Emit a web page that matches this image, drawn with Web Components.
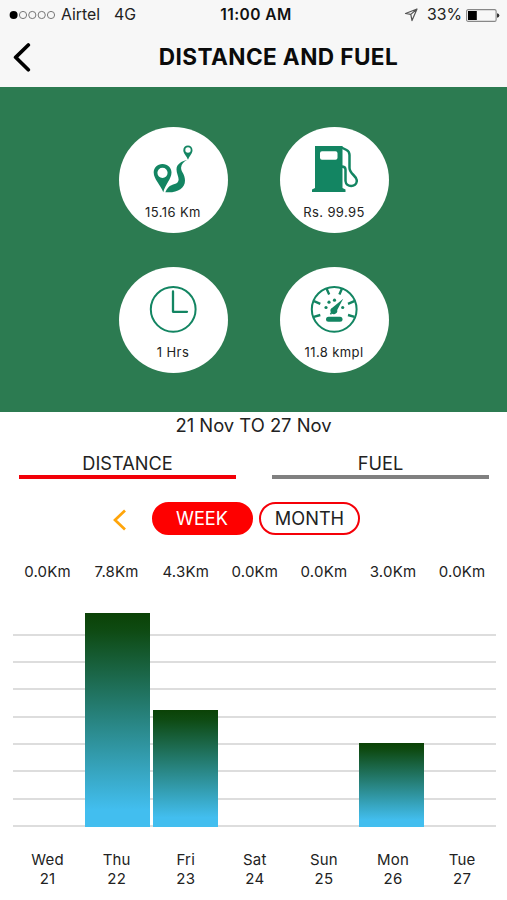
<!DOCTYPE html>
<html lang="en">
<head>
<meta charset="utf-8">
<meta name="viewport" content="width=device-width, initial-scale=1">
<title>Distance and Fuel</title>
<style>
  html,body{margin:0;height:100%}
  body{background:#fff;color:#222;font-family:Inter,"Liberation Sans",sans-serif;overflow:hidden}
</style>
</head>
<body>
<trip-screen></trip-screen>
<script>
const RESET = "*,*::before,*::after{box-sizing:border-box}svg{display:block}";

class PhoneStatus extends HTMLElement {
  constructor() { super(); this.attachShadow({ mode: "open" }); }
  connectedCallback() {
    this.shadowRoot.innerHTML = `
      <style>${RESET}
        :host{display:grid;grid-template-columns:1fr auto 1fr;align-items:center;height:30px;padding:0 7px 0 9px;font-size:15.8px;line-height:30px;color:#222}
        .left,.right{display:flex;align-items:center}
        .right{justify-content:flex-end}
        .net{margin-left:14px}
        .carrier{margin-left:5px}
        .time{font-weight:600;font-size:15.5px;letter-spacing:.45px;color:#111;padding-left:3px}
        .pct{margin:0 4px 0 9px}
      </style>
      <div class="left">
        <svg width="47" height="10" viewBox="0 0 47 10"><circle cx="4.6" cy="5" r="4" fill="#000"/>
          <g fill="none" stroke="#777" stroke-width="1"><circle cx="14" cy="5" r="3.6"/><circle cx="23.3" cy="5" r="3.6"/><circle cx="32.7" cy="5" r="3.6"/><circle cx="42" cy="5" r="3.6"/></g></svg>
        <span class="carrier">Airtel</span><span class="net">4G</span>
      </div>
      <span class="time">11:00 AM</span>
      <div class="right">
        <svg width="14" height="14" viewBox="0 0 14 14"><path d="M13 1 1.500 5.500l5.300.9 1.200 6.200zM13 1 6.800 6.400" fill="none" stroke="#555" stroke-width="1.2" stroke-linejoin="round"/></svg>
        <span class="pct">33%</span>
        <svg width="34" height="13" viewBox="0 0 34 13"><rect x=".6" y=".6" width="29.5" height="11.8" rx="1.5" fill="none" stroke="#888" stroke-width="1.1"/><path d="M2 2h8.800v9H2z"/><path d="M31 4.200q2.400.4 2.400 2.300T31 8.800z" fill="#333"/></svg>
      </div>`;
  }
}

class NavBar extends HTMLElement {
  constructor() { super(); this.attachShadow({ mode: "open" }); }
  connectedCallback() {
    this.shadowRoot.innerHTML = `
      <style>${RESET}
        :host{display:flex;align-items:center;height:57px;padding:0 0 3px 12px}
        .title{flex:1;text-align:center;padding-left:19px;font-size:22.6px;font-weight:700;line-height:54px;letter-spacing:.4px;color:#0b0b0b;white-space:nowrap}
      </style>
      <svg width="19" height="30" viewBox="0 0 19 30"><path d="M16.300 3 3.600 15.300l12.700 12.500" fill="none" stroke="#000" stroke-width="3.7" stroke-linecap="round" stroke-linejoin="round"/></svg>
      <div class="title"><slot></slot></div>`;
  }
}

/* Round white badge: icon goes in the slot, caption comes from the label attribute. */
class StatBadge extends HTMLElement {
  constructor() { super(); this.attachShadow({ mode: "open" }); }
  connectedCallback() {
    this.shadowRoot.innerHTML = `
      <style>${RESET}
        :host{display:flex;flex-direction:column;align-items:center;width:109px;height:106px;padding-top:15.5px;border-radius:50%;background:#fff;color:#138562}
        .label{margin-top:10.5px;font-size:13px;line-height:18px;letter-spacing:.4px;color:#222;white-space:nowrap}
      </style>
      <slot></slot>
      <div class="label">${this.getAttribute("label")}</div>`;
  }
}

class TabItem extends HTMLElement {
  constructor() { super(); this.attachShadow({ mode: "open" }); }
  connectedCallback() {
    this.shadowRoot.innerHTML = `
      <style>${RESET}
        :host{display:block;flex:1;text-align:center;font-size:18.2px;line-height:24px;border-bottom:4px solid #808080}
        :host([active]){border-color:#f20008}
      </style>
      <slot></slot>`;
  }
}

class RangePill extends HTMLElement {
  constructor() { super(); this.attachShadow({ mode: "open" }); }
  connectedCallback() {
    this.shadowRoot.innerHTML = `
      <style>${RESET}
        :host{display:block;box-sizing:border-box;width:101px;height:33px;border:2.5px solid #f50008;border-radius:17px;text-align:center;font-size:18.2px;line-height:29px}
        :host([active]){background:#fe0000;border-color:#fe0000;color:#fff}
      </style>
      <slot></slot>`;
  }
}

class BarChart extends HTMLElement {
  constructor() { super(); this.attachShadow({ mode: "open" }); }
  connectedCallback() {
    const days = [["Wed", 21, "0.0", 0], ["Thu", 22, "7.8", 214], ["Fri", 23, "4.3", 117.5], ["Sat", 24, "0.0", 0], ["Sun", 25, "0.0", 0], ["Mon", 26, "3.0", 83.7], ["Tue", 27, "0.0", 0]];
    this.shadowRoot.innerHTML = `
      <style>${RESET}
        :host{display:block;font-size:15px}
        .row{display:grid;grid-template-columns:repeat(7,69.1px);padding-left:13px;text-align:center;line-height:19px;letter-spacing:.2px}
        .days{margin-top:23px}
        .plot{display:grid;grid-template-columns:repeat(7,65px);column-gap:3.6px;align-items:end;height:214px;margin:32px 11.5px 0 13px;padding-left:3.2px;
          background:repeating-linear-gradient(to top,#ddd 0,#ddd 2px,transparent 2px,transparent 27.33px) 0 100%/100% 194px no-repeat}
        .bar{background:linear-gradient(#0b4206,#0e4a12 8%,#42beef 92%)}
      </style>
      <div class="row values">${days.map((d) => `<span>${d[2]}Km</span>`).join("")}</div>
      <div class="plot">${days.map((d) => `<div class="bar" style="height:${d[3]}px"></div>`).join("")}</div>
      <div class="row days">${days.map((d) => `<span>${d[0]}<br>${d[1]}</span>`).join("")}</div>`;
  }
}

class TripScreen extends HTMLElement {
  constructor() { super(); this.attachShadow({ mode: "open" }); }
  connectedCallback() {
    this.shadowRoot.innerHTML = `
      <style>${RESET}
        :host{display:flex;flex-direction:column;width:507px;height:900px;background:#fff}
        header{height:87px;background:#f7f7f7}
        .stats{display:grid;grid-template-columns:109px 109px;grid-auto-rows:106px;gap:34px 52px;justify-content:center;height:325px;padding-top:40px;background:#2c7b51}
        .dates{height:27px;text-align:center;font-size:18.4px;line-height:27px}
        .tabs{display:flex;gap:36px;margin:12px 18px 0 19px}
        .range{display:flex;align-items:center;gap:6.5px;margin:23px 0 0 111px}
        .range svg{margin:2px 16px 0 0}
        bar-chart{margin-top:27px}
      </style>
      <header><phone-status></phone-status><nav-bar>DISTANCE AND FUEL</nav-bar></header>
      <section class="stats">
        <stat-badge label="15.16 Km">
          <svg width="48" height="50" viewBox="4.5 0 48 50" fill="currentColor">
            <path fill-rule="evenodd" d="M18 21C12.700 21 9.200 24.700 9.200 29.500 9.200 36 16 42 18.800 49.200 20.400 42 27 36 27 29.500 27 24.700 23.300 21 18 21zM18 24.700a5.100 5.100 0 1 1 0 10.200 5.100 5.100 0 0 1 0-10.200z"/>
            <path fill-rule="evenodd" d="M43.500 2.500C40.800 2.500 38.800 4.500 38.800 7.200 38.800 10.500 42.200 12.800 43.500 16.800 44.900 12.800 48 10.500 48 7.200 48 4.500 46 2.500 43.500 2.500zM43.500 4.300a2.700 2.700 0 1 1 0 5.400 2.700 2.700 0 0 1 0-5.400z"/>
            <path d="M42.500 17C37 18.200 32 21 32 26.500 32 31.500 36 36 33 39.500 29.500 42.500 24.500 40.500 20.800 49.200 32 50.300 40.500 46 40.500 37.500 40.500 31 36.300 28.500 36.600 24.500 36.900 21 39.500 18.600 42.500 17z"/>
          </svg>
        </stat-badge>
        <stat-badge label="Rs. 99.95">
          <svg width="48" height="50" viewBox="0 0 48 50" fill="currentColor">
            <path fill-rule="evenodd" d="M5 3h27.500v42l3 1.500V49H2v-2.500L5 45zM12 8.300q-2 0-2 2v4.400q0 2 2 2h13.500q2 0 2-2v-4.400q0-2-2-2z"/>
            <path d="M31.500 4.500 36.500 7Q39.500 8.500 39.500 12V25C39.500 31 47.300 33 46.800 38 46.300 44.500 36 44.500 35.500 38V26.500Q35.500 23.500 31.500 23.500" fill="none" stroke="currentColor" stroke-width="2.500"/>
          </svg>
        </stat-badge>
        <stat-badge label="1 Hrs">
          <svg width="48" height="50" viewBox="0 0 48 50" fill="none" stroke="currentColor">
            <circle cx="24.200" cy="26.300" r="22.400" stroke-width="2"/><path d="M24 8.500V28.800H38" stroke-width="2.300" stroke-linecap="round" stroke-linejoin="round"/>
          </svg>
        </stat-badge>
        <stat-badge label="11.8 kmpl">
          <svg width="48" height="50" viewBox="0 0 48 50" fill="currentColor">
            <circle cx="24.200" cy="26.300" r="22.400" fill="none" stroke="currentColor" stroke-width="2"/>
            <path d="M16.500 5.500l2.700 6M32 5.500l-2.600 6M4 18.200l6.300 2.700M44.300 18.200l-6.300 2.700M3.800 33.800l6.500-1.800M44.500 33.800l-6.500-1.800" fill="none" stroke="currentColor" stroke-width="2.400"/>
            <path d="M33.200 15.800 27.200 27A3.400 3.400 0 1 1 22.300 24.700z"/><path d="M22 28.500l-1.500 2.800" stroke="currentColor" stroke-width="1.500"/>
            <circle cx="16" cy="24.500" r="1.600"/><circle cx="19" cy="19.200" r="1.600"/><circle cx="24.500" cy="17.200" r="1.600"/><circle cx="32.700" cy="24.500" r="1.600"/>
            <rect x="16" y="33.800" width="16.500" height="5" rx="2.500"/>
          </svg>
        </stat-badge>
      </section>
      <div class="dates">21 Nov TO 27 Nov</div>
      <nav class="tabs"><tab-item active>DISTANCE</tab-item><tab-item>FUEL</tab-item></nav>
      <div class="range">
        <svg width="18" height="24" viewBox="0 0 18 24"><path d="M14 2.500 4 12l10 9.500" fill="none" stroke="#ffa50a" stroke-width="2.700"/></svg>
        <range-pill active>WEEK</range-pill><range-pill>MONTH</range-pill>
      </div>
      <bar-chart></bar-chart>`;
  }
}

customElements.define("phone-status", PhoneStatus);
customElements.define("nav-bar", NavBar);
customElements.define("stat-badge", StatBadge);
customElements.define("tab-item", TabItem);
customElements.define("range-pill", RangePill);
customElements.define("bar-chart", BarChart);
customElements.define("trip-screen", TripScreen);
</script>
</body>
</html>
